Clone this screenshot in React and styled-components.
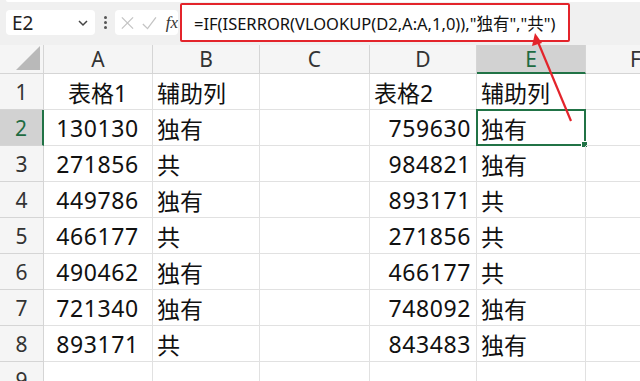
import React from 'react';
import styled, { createGlobalStyle } from 'styled-components';

const GlobalStyle = createGlobalStyle`
  html, body {
    margin: 0;
    padding: 0;
    background: #ffffff;
    overflow: hidden;
  }
  body {
    font-family: "Noto Sans", "Noto Sans CJK SC", sans-serif;
  }
`;

const COLUMNS = [
  { key: 'A', width: 109 },
  { key: 'B', width: 107 },
  { key: 'C', width: 110 },
  { key: 'D', width: 107 },
  { key: 'E', width: 109 },
  { key: 'F', width: 100 },
];

const ROWS = [
  ['表格1', '辅助列', '', '表格2', '辅助列'],
  ['130130', '独有', '', '759630', '独有'],
  ['271856', '共', '', '984821', '独有'],
  ['449786', '独有', '', '893171', '共'],
  ['466177', '共', '', '271856', '共'],
  ['490462', '独有', '', '466177', '共'],
  ['721340', '独有', '', '748092', '独有'],
  ['893171', '共', '', '843483', '独有'],
  ['', '', '', '', ''],
];

const isNumber = (v) => /^\d+$/.test(v);

// column A is centred; elsewhere numbers go right and text goes left
const alignFor = (key, value) => {
  if (key === 'A') return 'center';
  return isNumber(value) ? 'right' : 'left';
};

const Page = styled.div`
  position: relative;
  width: 640px;
  height: 381px;
  overflow: hidden;
  background: #ffffff;
`;

const TopBar = styled.div`
  position: relative;
  height: 45px;
  background: #f0f0f0;
  display: flex;
  align-items: center;
  padding-left: 6px;
  box-sizing: border-box;
`;

const RibbonEdge = styled.div`
  position: absolute;
  left: 6px;
  right: 0;
  top: 0;
  height: 2px;
  background: #ffffff;
  border-bottom-left-radius: 4px;
`;

const NameBox = styled.div`
  width: 89px;
  height: 25px;
  background: #ffffff;
  border-radius: 4px;
  display: flex;
  align-items: center;
  justify-content: space-between;
  padding: 0 6px 0 6px;
  box-sizing: border-box;
  font-family: "Noto Sans", sans-serif;
  font-size: 19px;
  color: #222;
`;

const Dots = styled.div`
  width: 20px;
  display: flex;
  flex-direction: column;
  align-items: center;
  gap: 2px;

  span {
    width: 3px;
    height: 3px;
    border-radius: 50%;
    background: #555;
  }
`;

const ActionBox = styled.div`
  width: 63px;
  height: 25px;
  background: #ffffff;
  border-radius: 4px;
  display: flex;
  align-items: center;
  padding-left: 5px;
  box-sizing: border-box;
  gap: 6px;
`;

const Fx = styled.span`
  font-family: "Liberation Serif", serif;
  font-style: italic;
  font-size: 17px;
  color: #333;
  margin-left: 2px;
`;

const FormulaBox = styled.div`
  margin-left: 2px;
  width: 390px;
  height: 39px;
  background: #ffffff;
  border: 2.5px solid #e3242b;
  border-radius: 2px;
  box-sizing: border-box;
  display: flex;
  align-items: center;
  padding-left: 12px;
  font-family: "Noto Sans", "Noto Sans CJK SC", sans-serif;
  font-size: 16.5px;
  color: #111;
  white-space: nowrap;
`;

const Grid = styled.div`
  display: grid;
  grid-template-columns: 44px ${COLUMNS.map((c) => `${c.width}px`).join(' ')};
  grid-template-rows: 29px repeat(9, 36px);
`;

const Corner = styled.div`
  background: #f5f5f5;
  border-right: 1px solid #d5d5d5;
  border-bottom: 1px solid #d5d5d5;
  position: relative;

  &::after {
    content: '';
    position: absolute;
    right: 3px;
    bottom: 3px;
    width: 0;
    height: 0;
    border-left: 24px solid transparent;
    border-bottom: 24px solid #b9b9b9;
  }
`;

const ColHeader = styled.div`
  background: ${(p) => (p.$active ? '#d2d2d2' : '#f5f5f5')};
  border-right: 1px solid #d5d5d5;
  border-bottom: ${(p) => (p.$active ? '2px solid #217346' : '1px solid #d5d5d5')};
  box-sizing: border-box;
  display: flex;
  align-items: center;
  justify-content: center;
  font-family: "Noto Sans", sans-serif;
  font-size: 21px;
  color: ${(p) => (p.$active ? '#1e6b41' : '#333')};
`;

const RowHeader = styled.div`
  background: ${(p) => (p.$active ? '#d2d2d2' : '#f5f5f5')};
  border-right: ${(p) => (p.$active ? '2px solid #217346' : '1px solid #d5d5d5')};
  border-bottom: 1px solid #d5d5d5;
  box-sizing: border-box;
  display: flex;
  align-items: center;
  justify-content: center;
  font-family: "Noto Sans", sans-serif;
  font-size: 21px;
  color: ${(p) => (p.$active ? '#1e6b41' : '#333')};
`;

const Cell = styled.div`
  position: relative;
  border-right: 1px solid #e1e1e1;
  border-bottom: 1px solid #e1e1e1;
  box-sizing: border-box;
  display: flex;
  align-items: center;
  justify-content: ${(p) =>
    p.$align === 'center' ? 'center' : p.$align === 'right' ? 'flex-end' : 'flex-start'};
  padding: 0 5px 0 4px;
  font-family: "Noto Sans", "Noto Sans CJK SC", sans-serif;
  font-size: 23px;
  letter-spacing: ${(p) => (p.$numeric ? '0.6px' : '0')};
  color: #111;
  white-space: nowrap;
`;

const Selection = styled.div`
  position: absolute;
  left: -1px;
  top: -1px;
  right: -1px;
  bottom: -1px;
  border: 2px solid #217346;
  pointer-events: none;

  &::after {
    content: '';
    position: absolute;
    right: -4px;
    bottom: -4px;
    width: 5px;
    height: 5px;
    background: #217346;
    border: 1px solid #ffffff;
  }
`;

const Arrow = styled.svg`
  position: absolute;
  left: 0;
  top: 0;
  pointer-events: none;
`;

export default function App() {
  return (
    <Page>
      <GlobalStyle />
      <TopBar>
        <RibbonEdge />
        <NameBox>
          <span>E2</span>
          <svg width="12" height="8" viewBox="0 0 12 8">
            <path d="M2 2 L6 6 L10 2" fill="none" stroke="#444" strokeWidth="1.5" />
          </svg>
        </NameBox>
        <Dots>
          <span />
          <span />
          <span />
        </Dots>
        <ActionBox>
          <svg width="16" height="16" viewBox="0 0 16 16">
            <path d="M2 2 L14 14 M14 2 L2 14" stroke="#c4c4c4" strokeWidth="1.4" />
          </svg>
          <svg width="18" height="16" viewBox="0 0 18 16">
            <path d="M2 9 L7 14 L16 2" fill="none" stroke="#c4c4c4" strokeWidth="1.4" />
          </svg>
          <Fx>fx</Fx>
        </ActionBox>
        <FormulaBox>=IF(ISERROR(VLOOKUP(D2,A:A,1,0)),"独有","共")</FormulaBox>
      </TopBar>
      <Grid>
        <Corner />
        {COLUMNS.map((c) => (
          <ColHeader key={c.key} $active={c.key === 'E'}>
            {c.key}
          </ColHeader>
        ))}
        {ROWS.map((row, r) => (
          <React.Fragment key={r}>
            <RowHeader $active={r === 1}>{r + 1}</RowHeader>
            {COLUMNS.map((c, ci) => {
              const value = row[ci] || '';
              return (
                <Cell key={c.key} $align={alignFor(c.key, value)} $numeric={isNumber(value)}>
                  {value}
                  {r === 1 && c.key === 'E' && <Selection />}
                </Cell>
              );
            })}
          </React.Fragment>
        ))}
      </Grid>
      <Arrow width="640" height="381" viewBox="0 0 640 381">
        <line x1="571" y1="121" x2="538" y2="42" stroke="#e3242b" strokeWidth="2.2" />
        <polygon points="535,33 532,46 542,43" fill="#e3242b" />
      </Arrow>
    </Page>
  );
}
